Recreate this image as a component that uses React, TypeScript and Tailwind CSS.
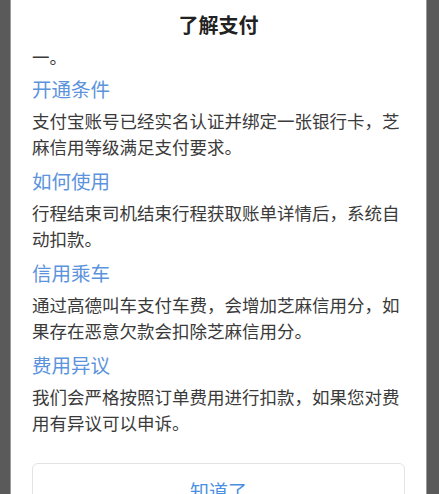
const sections = [
  {
    title: "开通条件",
    body: "支付宝账号已经实名认证并绑定一张银行卡，芝麻信用等级满足支付要求。",
  },
  {
    title: "如何使用",
    body: "行程结束司机结束行程获取账单详情后，系统自动扣款。",
  },
  {
    title: "信用乘车",
    body: "通过高德叫车支付车费，会增加芝麻信用分，如果存在恶意欠款会扣除芝麻信用分。",
  },
  {
    title: "费用异议",
    body: "我们会严格按照订单费用进行扣款，如果您对费用有异议可以申诉。",
  },
];

export default function App() {
  return (
    <div
      className="h-[494px] w-full overflow-hidden bg-[#5a5a5a]"
      style={{ fontFamily: '"Noto Sans CJK SC", "Noto Sans", sans-serif' }}
    >
      <div className="ml-[11px] flex h-full w-[415px] flex-col bg-white shadow-[0_0_0_1px_#9a9a9a]">
        <div className="flex h-[50px] shrink-0 items-center justify-center">
          <h1 className="text-[20px] font-bold text-[#222]">了解支付</h1>
        </div>

        <div className="flex-1 overflow-hidden px-[21px]">
          {/* tail of the paragraph scrolled up under the header */}
          <p className="-mt-[6px] text-[17.5px] leading-[26px] text-[#3a3a3a]">一。</p>

          {sections.map((s, i) => (
            <div key={s.title} className={i === 0 ? "mt-[5px]" : "mt-[7px]"}>
              <h2 className="text-[19.5px] leading-[28px] text-[#5b93dc]">{s.title}</h2>
              <p className="mt-[5px] text-[17.5px] leading-[26px] text-[#3a3a3a]">{s.body}</p>
            </div>
          ))}

          <button className="mt-[27px] flex h-[56px] w-full items-center justify-center rounded-[6px] border border-[#e3e3e3] text-[19px] text-[#4a8fe0]">
            知道了
          </button>
        </div>
      </div>
    </div>
  );
}
